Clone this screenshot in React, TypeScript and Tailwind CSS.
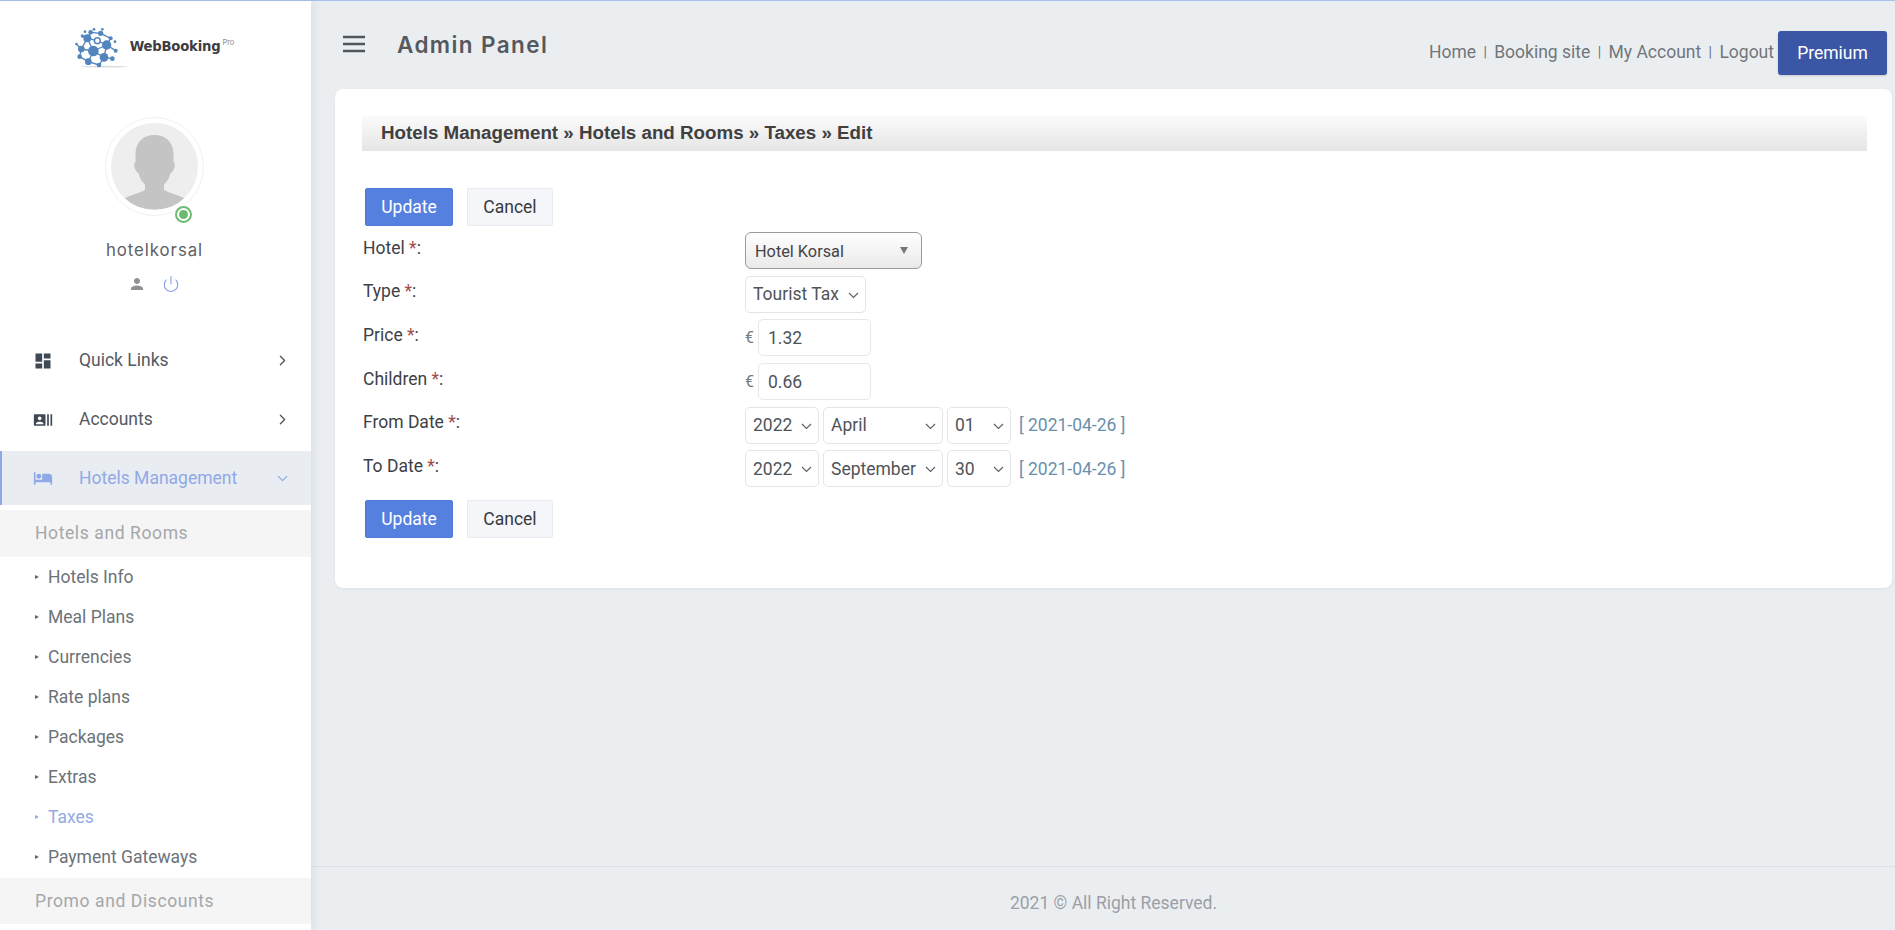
import React from "react";
import { ChevronRight, ChevronDown, Power } from "lucide-react";

const roboto = "font-['Roboto',sans-serif]";

function Logo() {
  const nodes: [number, number, number][] = [
    [283, 153, 16], [323, 135, 14], [315, 172, 13], [265, 115, 12], [268, 185, 10], [247, 147, 10], [300, 195, 7],
    [340, 176, 7], [242, 170, 7], [350, 152, 6], [335, 115, 6], [305, 100, 8], [275, 97, 7], [250, 108, 5],
    [232, 132, 4], [310, 88, 4], [285, 88, 4], [348, 125, 4], [258, 95, 4], [295, 122, 11],
  ];
  const links: [number, number][] = [[0, 1], [0, 2], [0, 3], [0, 4], [0, 5], [1, 2], [1, 9], [1, 10], [2, 7], [2, 6], [3, 5], [3, 12], [3, 13], [4, 8], [5, 8], [5, 14], [11, 10], [11, 12], [4, 6], [1, 19], [3, 19]];
  return (
    <svg width="54" height="40" viewBox="228 84 162 120" aria-hidden="true">
      <ellipse cx="315" cy="200" rx="70" ry="2.500" fill="#d9dde2" />
      {links.map(([a, b], i) => (
        <line key={i} x1={nodes[a][0]} y1={nodes[a][1]} x2={nodes[b][0]} y2={nodes[b][1]} stroke="#5285bd" strokeWidth="4" />
      ))}
      {nodes.map(([x, y, r], i) => (
        <circle key={i} cx={x} cy={y} r={r} fill="#5285bd" />
      ))}
      <circle cx="295" cy="122" r="6.500" fill="#ffffff" />
    </svg>
  );
}

function Mi({ d, className }: { d: string; className?: string }) {
  return (
    <svg viewBox="0 0 24 24" fill="currentColor" className={className} aria-hidden="true">
      <path d={d} />
    </svg>
  );
}

const subItems = ["Hotels Info", "Meal Plans", "Currencies", "Rate plans", "Packages", "Extras", "Taxes", "Payment Gateways"];

function Sidebar() {
  return (
    <aside className={`w-[311px] shrink-0 bg-white h-full flex flex-col relative z-10 overflow-hidden shadow-[2px_0_9px_rgba(120,135,160,0.16)] ${roboto}`}>
      <div className="h-[116px] shrink-0 flex justify-center items-start pt-[27px] pr-[2px]">
        <div className="flex items-start">
          <Logo />
          <span className="ml-[1px] mt-[9px] font-['DejaVu_Sans',sans-serif] font-bold text-[13.200px] leading-[20px] tracking-[-0.2px] text-[#3d3d3f]">WebBooking</span>
          <span className="ml-[2px] mt-[10px] font-['Inter',sans-serif] text-[7.500px] leading-[10px] text-[#8b8b8b]">Pro</span>
        </div>
      </div>
      <div className="flex flex-col items-center shrink-0 pr-[2px]">
        <div className="relative w-[99px] h-[99px] rounded-full border border-[#f0f0f0] p-[5px]">
          <div className="w-full h-full rounded-full bg-[#eeeeee] overflow-hidden">
            <svg viewBox="0 0 87 87" className="w-full h-full" aria-hidden="true">
              <path d="M43.500 12c-11 0-19 7-19 19v8c-1.800 1-1.800 5 0 7.500.8 2 2 3.500 3 3.500 1 5 3.500 9 6.500 11.500v5.500c-5 3-14 5-21 8.500 7.500 7 18.500 11 30.500 11s23-4 30.500-11c-7-3.500-16-5.500-21-8.500v-5.500c3-2.500 5.500-6.500 6.500-11.500 1 0 2.200-1.500 3-3.500 1.800-2.500 1.800-6.500 0-7.500v-8c0-12-8-19-19-19z" fill="#c4c4c4" />
            </svg>
          </div>
          <span className="absolute left-[69px] top-[88px] w-[17px] h-[17px] rounded-full border-2 border-[#6dbb70] bg-white flex items-center justify-center">
            <span className="w-[9px] h-[9px] rounded-full bg-[#6dbb70]" />
          </span>
        </div>
        <div className="mt-[22px] h-[24px] leading-[24px] font-['Inter',sans-serif] text-[16.800px] tracking-[0.95px] text-[#5d6166]">hotelkorsal</div>
        <div className="mt-[12px] h-[20px] flex items-center gap-[16px] pr-[2px]">
          <Mi d="M12 12c2.210 0 4-1.790 4-4s-1.790-4-4-4-4 1.790-4 4 1.790 4 4 4zm0 2c-2.670 0-8 1.340-8 4v2h16v-2c0-2.660-5.330-4-8-4z" className="w-[18px] h-[18px] text-[#8c9095]" />
          <Power className="w-[18px] h-[18px] text-[#7f9fe0]" strokeWidth={1.400} />
        </div>
      </div>
      <nav className="mt-[37px] flex flex-col shrink-0">
        <div className="h-[59px] flex items-center pl-[33px] pr-[20px] text-[#535a61]">
          <Mi d="M3 13h8V3H3v10zm0 8h8v-6H3v6zm10 0h8V11h-8v10zm0-18v6h8V3h-8z" className="w-[20px] h-[20px] text-[#3f4955]" />
          <span className="ml-[26px] text-[17.500px] flex-1">Quick Links</span>
          <ChevronRight className="w-[17px] h-[17px] text-[#4d545b]" strokeWidth={1.800} />
        </div>
        <div className="h-[59px] flex items-center pl-[33px] pr-[20px] text-[#535a61]">
          <Mi d="M21 5v14h2V5h-2zm-4 14h2V5h-2v14zM14 5H2c-.55 0-1 .45-1 1v12c0 .55.45 1 1 1h12c.55 0 1-.45 1-1V6c0-.55-.45-1-1-1zM8 7.750c1.240 0 2.250 1.010 2.250 2.250S9.240 12.250 8 12.250 5.750 11.240 5.750 10 6.760 7.750 8 7.750zM12.500 17h-9v-.75c0-1.500 3-2.250 4.500-2.250s4.500.75 4.500 2.250V17z" className="w-[20px] h-[20px] text-[#3f4955]" />
          <span className="ml-[26px] text-[17.500px] flex-1">Accounts</span>
          <ChevronRight className="w-[17px] h-[17px] text-[#4d545b]" strokeWidth={1.800} />
        </div>
        <div className="mt-[2px] h-[54px] flex items-center pl-[31px] pr-[20px] bg-[#e9edf2] border-l-2 border-[#8fa9e6] text-[#8fa9e6]">
          <Mi d="M7 13c1.660 0 3-1.340 3-3S8.660 7 7 7s-3 1.340-3 3 1.340 3 3 3zm12-6h-8v7H3V5H1v15h2v-3h18v3h2v-9c0-2.210-1.790-4-4-4z" className="w-[20px] h-[20px]" />
          <span className="ml-[26px] text-[17.500px] flex-1">Hotels Management</span>
          <ChevronDown className="w-[17px] h-[17px]" strokeWidth={1.800} />
        </div>
        <div className="mt-[5px] h-[47px] flex items-center pl-[35px] bg-[#f5f5f5] text-[17.500px] tracking-[0.6px] text-[#a4a7ab]">Hotels and Rooms</div>
        {subItems.map((label) => {
          const on = label === "Taxes";
          return (
            <div key={label} className={`h-[40px] flex items-center pl-[35px] text-[17.500px] ${on ? "text-[#93abe3]" : "text-[#6c7278]"}`}>
              <span className={`w-0 h-0 border-y-[2.500px] border-y-transparent border-l-[4px] ${on ? "border-l-[#93abe3]" : "border-l-[#60666c]"}`} />
              <span className="ml-[9px]">{label}</span>
            </div>
          );
        })}
        <div className="mt-[1px] h-[46px] flex items-center pl-[35px] bg-[#f5f5f5] text-[17.500px] tracking-[0.6px] text-[#a4a7ab]">Promo and Discounts</div>
      </nav>
    </aside>
  );
}

function Sep() {
  return <span className="mx-[7.400px] text-[14px] text-[#6d7277]">|</span>;
}

function Header() {
  return (
    <header className={`h-[88px] shrink-0 flex items-start pl-[31px] pr-[8px] ${roboto}`}>
      <svg width="24" height="18" viewBox="0 0 24 18" className="mt-[34px] text-[#50565c]" aria-hidden="true">
        <path d="M1 2h22M1 9h22M1 16h22" stroke="currentColor" strokeWidth="2.500" />
      </svg>
      <div className="ml-[31px] mt-[29px] h-[30px] leading-[30px] font-['Inter',sans-serif] font-semibold text-[22.500px] tracking-[1.400px] text-[#55595e]">Admin Panel</div>
      <div className="ml-auto flex items-start">
        <div className="mt-[38px] h-[26px] leading-[26px] flex items-center text-[17.500px] text-[#71767b]">
          <span>Home</span><Sep /><span>Booking site</span><Sep /><span>My Account</span><Sep /><span>Logout</span>
        </div>
        <button className="ml-[4px] mt-[30px] w-[109px] h-[44px] rounded-[3px] bg-[#3c56a6] text-white text-[17.500px] shadow-[0_1px_2px_rgba(0,0,0,0.15)]">Premium</button>
      </div>
    </header>
  );
}

function Buttons() {
  return (
    <div className="flex items-center gap-[14px] pl-[3px]">
      <button className="w-[88px] h-[38px] rounded-[2px] bg-[#5580df] border border-[#4f79d6] text-white text-[17.500px]">Update</button>
      <button className="w-[86px] h-[38px] rounded-[2px] bg-[#f4f6f9] border border-[#e8ebf0] text-[#373b3f] text-[17.500px]">Cancel</button>
    </div>
  );
}

function Sel({ value, className }: { value: string; className: string }) {
  return (
    <div className={`relative h-[37px] ${className}`}>
      <select
        className="w-full h-full appearance-none rounded-[5px] border border-[#e2e5e9] bg-white pl-[7px] text-[17.500px] text-[#4f5459] font-['Roboto',sans-serif]"
        defaultValue={value}
      >
        <option>{value}</option>
      </select>
      <svg width="11" height="7" viewBox="0 0 11 7" className="absolute right-[7px] top-[16px] pointer-events-none text-[#5a5f64]" aria-hidden="true">
        <path d="M1 1l4.500 4.500L10 1" fill="none" stroke="currentColor" strokeWidth="1.100" />
      </svg>
    </div>
  );
}

const inputCls = "w-[113px] h-[37px] rounded-[5px] border border-[#e6e8ec] bg-white pl-[9px] text-[17.500px] text-[#4f5459] font-['Roboto',sans-serif]";

function Label({ text }: { text: string }) {
  return (
    <div className="w-[382px] shrink-0 mt-[3.500px] text-[17.500px] leading-[24px] text-[#3d4146]">
      {text} <span className="text-[#a04a4a]">*</span>:
    </div>
  );
}

function DateRow({ label, month, day }: { label: string; month: string; day: string }) {
  return (
    <div className="flex items-start h-[37px]">
      <Label text={label} />
      <div className="flex items-center">
        <Sel value="2022" className="w-[74px]" />
        <Sel value={month} className="w-[120px] ml-[4px]" />
        <Sel value={day} className="w-[64px] ml-[4px]" />
        <span className="ml-[8px] text-[17.500px] text-[#6a90ab]">[ 2021-04-26 ]</span>
      </div>
    </div>
  );
}

function Card() {
  return (
    <section className={`ml-[24px] mr-[3px] h-[499px] shrink-0 rounded-[8px] bg-white pl-[27px] pr-[25px] pt-[27px] shadow-[0_1px_3px_rgba(120,135,160,0.12)] ${roboto}`}>
      <div className="h-[35px] flex items-center pl-[19px] bg-gradient-to-b from-[#fbfbfb] to-[#e5e5e5] font-['Liberation_Sans',sans-serif] font-bold text-[18.750px] text-[#404040]">
        Hotels Management » Hotels and Rooms » Taxes » Edit
      </div>
      <div className="mt-[37px]"><Buttons /></div>
      <div className="mt-[6px] flex flex-col gap-[6.700px] pl-[1px]">
        <div className="flex items-start h-[37px]">
          <Label text="Hotel" />
          <div className="w-[177px] h-[37px] rounded-[6px] border border-[#9a9a9a] bg-gradient-to-b from-[#ffffff] to-[#e9e9e9] flex items-center pl-[9px] pr-[13px] text-[16.300px] text-[#444444]">
            <span className="flex-1 mt-[4px]">Hotel Korsal</span>
            <span className="w-0 h-0 border-x-[4px] border-x-transparent border-t-[7px] border-t-[#777777]" />
          </div>
        </div>
        <div className="flex items-start h-[37px]">
          <Label text="Type" />
          <Sel value="Tourist Tax" className="w-[121px]" />
        </div>
        <div className="flex items-start h-[37px]">
          <Label text="Price" />
          <div className="flex items-center">
            <span className="w-[13px] text-[16px] text-[#767b80]">€</span>
            <input className={inputCls} defaultValue="1.32" />
          </div>
        </div>
        <div className="flex items-start h-[37px]">
          <Label text="Children" />
          <div className="flex items-center">
            <span className="w-[13px] text-[16px] text-[#767b80]">€</span>
            <input className={inputCls} defaultValue="0.66" />
          </div>
        </div>
        <DateRow label="From Date" month="April" day="01" />
        <DateRow label="To Date" month="September" day="30" />
      </div>
      <div className="mt-[12.500px]"><Buttons /></div>
    </section>
  );
}

export default function App() {
  return (
    <div className="w-[1895px] h-[930px] overflow-hidden flex flex-col bg-[#ebeef1]">
      <div className="h-[1px] shrink-0 bg-[#a9c0ea]" />
      <div className="flex-1 flex min-h-0">
        <Sidebar />
        <main className="flex-1 min-w-0 flex flex-col">
          <Header />
          <Card />
          <footer className={`mt-auto h-[64px] shrink-0 border-t border-[#dde1e6] pl-[21px] flex justify-center items-center pt-[10px] text-[17.500px] text-[#9b9fa6] ${roboto}`}>
            2021 © All Right Reserved.
          </footer>
        </main>
      </div>
    </div>
  );
}
